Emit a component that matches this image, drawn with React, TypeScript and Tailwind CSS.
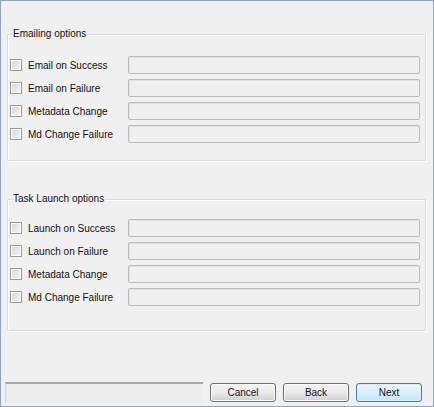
import React from "react";

const emailRows = ["Email on Success", "Email on Failure", "Metadata Change", "Md Change Failure"];
const taskRows = ["Launch on Success", "Launch on Failure", "Metadata Change", "Md Change Failure"];

function OptionRow({ label }: { label: string }) {
  return (
    <div className="flex h-[18px] items-center">
      <div className="h-[12px] w-[12px] shrink-0 border border-[#9a9a9a] bg-white p-px">
        <div className="h-full w-full bg-gradient-to-br from-[#d8d8d8] to-[#f4f4f4]" />
      </div>
      <span className="ml-[6px] w-[100px] shrink-0 text-[#111]">{label}</span>
      <div className="h-[18px] w-[292px] rounded-[2px] border border-[#bcbcbc] bg-[#f0f0f0] shadow-[inset_1px_1px_0_#e2e2e2]" />
    </div>
  );
}

function GroupBox({ title, rows, className }: { title: string; rows: string[]; className: string }) {
  return (
    <div className={`relative ml-[6px] w-[419px] rounded-[1px] border border-[#dadada] shadow-[inset_1px_1px_0_#ffffff,1px_1px_0_#ffffff] ${className}`}>
      <span className="absolute left-[4px] top-[-7px] bg-[#f0f0f0] px-[1px] leading-[12px] text-[#111]">
        {title}
      </span>
      <div className="flex flex-col gap-[5px] pl-[2px]">
        {rows.map((r, i) => (
          <OptionRow key={i} label={r} />
        ))}
      </div>
    </div>
  );
}

function Button({ label, primary }: { label: string; primary?: boolean }) {
  return (
    <div
      className={`flex h-[19px] w-[66px] items-center justify-center rounded-[3px] border text-[#111] ${
        primary
          ? "border-[#3c7fb1] bg-gradient-to-b from-[#eaf6fd] via-[#d9f0fc] to-[#bee6fd] shadow-[inset_0_0_0_1px_#d8eefa]"
          : "border-[#707070] bg-gradient-to-b from-[#f2f2f2] via-[#ebebeb] to-[#cfcfcf] shadow-[inset_0_0_0_1px_#fcfcfc]"
      }`}
    >
      {label}
    </div>
  );
}

export default function App() {
  return (
    <div
      className="flex h-[407px] w-[434px] flex-col border border-[#8fa3bb] bg-[#f0f0f0] text-[10px]"
      style={{ fontFamily: '"Liberation Sans", Arial, sans-serif' }}
    >
      <GroupBox title="Emailing options" rows={emailRows} className="mt-[33px] h-[127px] pt-[21px]" />
      <GroupBox title="Task Launch options" rows={taskRows} className="mt-[38px] h-[132px] pt-[19px]" />
      <div className="mt-auto flex items-start pb-[3px]">
        <div className="ml-[4px] h-[21px] w-[198px] border-t-2 border-l border-[#a8a8a8] border-l-[#d0d0d0] bg-[#ededed]" />
        <div className="ml-[7px] mt-[1px] flex gap-[7px]">
          <Button label="Cancel" />
          <Button label="Back" />
          <Button label="Next" primary />
        </div>
      </div>
    </div>
  );
}
